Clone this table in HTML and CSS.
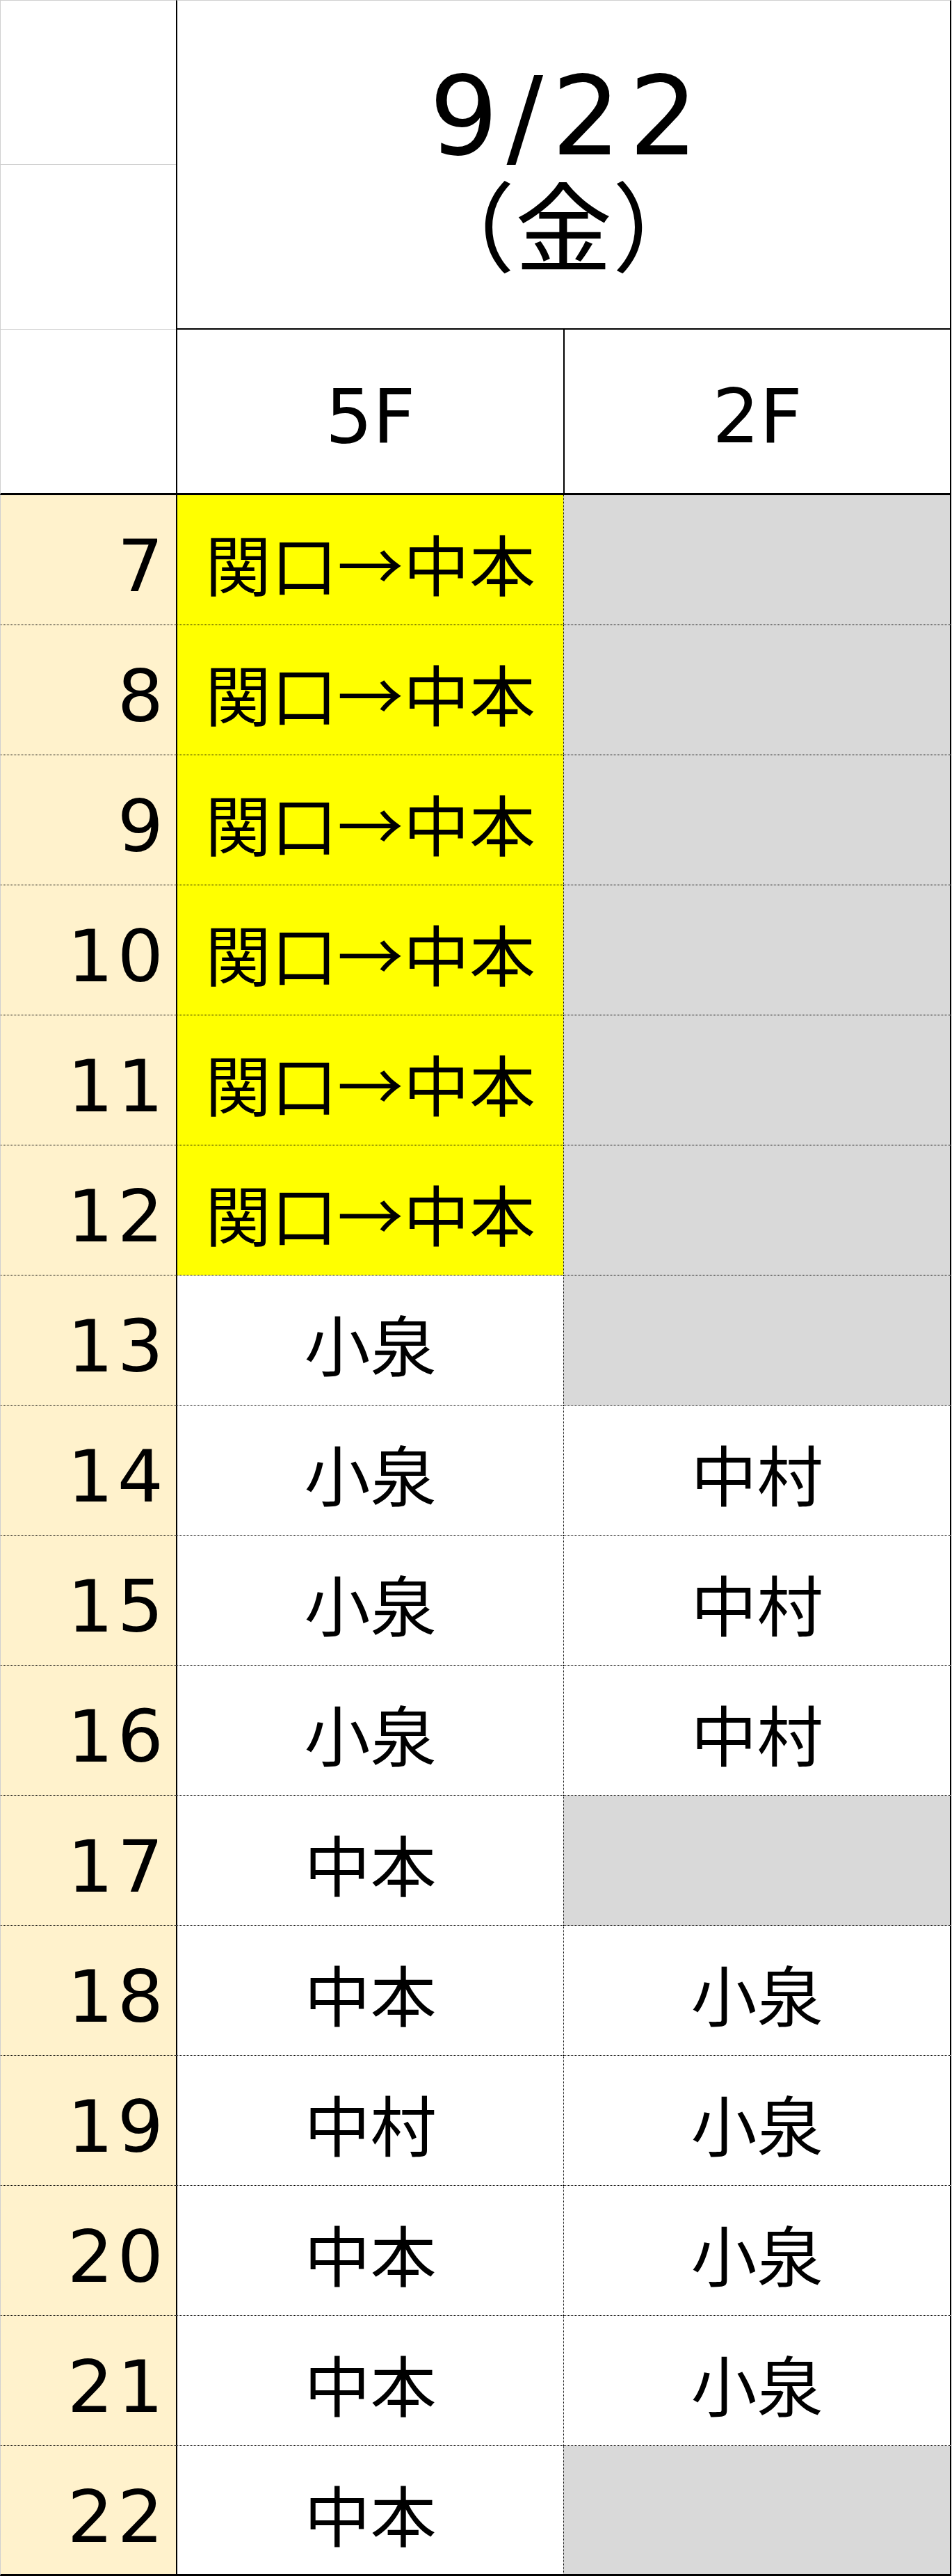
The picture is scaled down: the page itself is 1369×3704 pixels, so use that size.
FILE: index.html
```html
<!DOCTYPE html>
<html lang="ja">
<head>
<meta charset="utf-8">
<title>シフト表 9/22（金）</title>
<link rel="stylesheet" href="styles.css">
</head>
<body>
<div class="sheet">
  <div class="head">
    <div class="hl hl1"></div>
    <div class="hl hl2"></div>
    <div class="hl hl3"></div>
    <div class="date">
      <div class="date-num">9/22</div>
      <div class="date-day">（金）</div>
    </div>
    <div class="floor f5"><span>5F</span></div>
    <div class="floor f2"><span>2F</span></div>
  </div>

  <div class="row"><div class="hour">7</div><div class="c5 yellow">関口→中本</div><div class="c2 gray"></div></div>
  <div class="row"><div class="hour">8</div><div class="c5 yellow">関口→中本</div><div class="c2 gray"></div></div>
  <div class="row"><div class="hour">9</div><div class="c5 yellow">関口→中本</div><div class="c2 gray"></div></div>
  <div class="row"><div class="hour">10</div><div class="c5 yellow">関口→中本</div><div class="c2 gray"></div></div>
  <div class="row"><div class="hour">11</div><div class="c5 yellow">関口→中本</div><div class="c2 gray"></div></div>
  <div class="row"><div class="hour">12</div><div class="c5 yellow">関口→中本</div><div class="c2 gray"></div></div>
  <div class="row"><div class="hour">13</div><div class="c5">小泉</div><div class="c2 gray"></div></div>
  <div class="row"><div class="hour">14</div><div class="c5">小泉</div><div class="c2">中村</div></div>
  <div class="row"><div class="hour">15</div><div class="c5">小泉</div><div class="c2">中村</div></div>
  <div class="row"><div class="hour">16</div><div class="c5">小泉</div><div class="c2">中村</div></div>
  <div class="row"><div class="hour">17</div><div class="c5">中本</div><div class="c2 gray"></div></div>
  <div class="row"><div class="hour">18</div><div class="c5">中本</div><div class="c2">小泉</div></div>
  <div class="row"><div class="hour">19</div><div class="c5">中村</div><div class="c2">小泉</div></div>
  <div class="row"><div class="hour">20</div><div class="c5">中本</div><div class="c2">小泉</div></div>
  <div class="row"><div class="hour">21</div><div class="c5">中本</div><div class="c2">小泉</div></div>
  <div class="row last"><div class="hour">22</div><div class="c5">中本</div><div class="c2 gray"></div></div>
</div>
</body>
</html>
```

FILE: styles.css
```css
* { box-sizing: border-box; }

html, body {
  margin: 0;
  padding: 0;
  background: #ffffff;
}

body {
  font-family: "Noto Sans CJK JP", "DejaVu Sans", sans-serif;
  color: #000000;
}

.sheet {
  width: 1368px;
}

/* ---------- header ---------- */
.head {
  display: grid;
  grid-template-columns: 253px 557px 558px;
  grid-template-rows: 237px 237px 238px;
}

.hl {
  border-left: 1px solid #d0d0d0;
  background: #ffffff;
}
.hl1 {
  grid-column: 1;
  grid-row: 1;
  border-top: 1px solid #d0d0d0;
  border-bottom: 1px solid #d0d0d0;
}
.hl2 {
  grid-column: 1;
  grid-row: 2;
  border-bottom: 1px solid #d0d0d0;
}
.hl3 {
  grid-column: 1;
  grid-row: 3;
  border-bottom: 3px solid #000000;
}

.date {
  grid-column: 2 / 4;
  grid-row: 1 / 3;
  border-top: 1px solid #d0d0d0;
  border-left: 2px solid #000000;
  border-right: 2px solid #000000;
  border-bottom: 2px solid #000000;
  display: flex;
  flex-direction: column;
  align-items: center;
  padding-top: 89px;
}

.date-num {
  font-family: "DejaVu Sans", sans-serif;
  font-size: 156px;
  line-height: 156px;
  letter-spacing: 12px;
  padding-left: 12px;
}

.date-day {
  font-family: "Noto Sans CJK JP", sans-serif;
  font-size: 140px;
  line-height: 140px;
  margin-top: 3px;
  text-spacing-trim: space-all;
  font-feature-settings: "fwid" 1;
}

.floor {
  grid-row: 3;
  border-left: 2px solid #000000;
  border-bottom: 3px solid #000000;
  display: flex;
  justify-content: center;
  align-items: flex-start;
  padding-top: 72px;
  font-family: "DejaVu Sans", sans-serif;
  font-size: 107px;
  line-height: 107px;
}
.f5 { grid-column: 2; }
.f2 {
  grid-column: 3;
  border-right: 2px solid #000000;
}

/* ---------- data rows ---------- */
.row {
  display: grid;
  grid-template-columns: 253px 557px 558px;
  height: 187px;
}

.row > div {
  border-bottom: 1px dotted #000000;
  display: flex;
  align-items: flex-start;
}

.row.last > div {
  border-bottom: 3px solid #000000;
}

.hour {
  background: #fff2cc;
  border-left: 1px solid #d0d0d0;
  justify-content: flex-end;
  padding-right: 12px;
  padding-top: 50px;
  font-family: "DejaVu Sans", sans-serif;
  font-size: 104px;
  line-height: 104px;
  letter-spacing: 6px;
}

.c5,
.c2 {
  justify-content: center;
  padding-top: 49px;
  font-family: "Noto Sans CJK JP", sans-serif;
  font-size: 95px;
  line-height: 95px;
  background: #ffffff;
}

.c5 {
  border-left: 2px solid #000000;
}

.c2 {
  border-left: 1px dotted #000000;
  border-right: 2px solid #000000;
}

.yellow { background: #ffff00; }
.gray { background: #d9d9d9; }
```
